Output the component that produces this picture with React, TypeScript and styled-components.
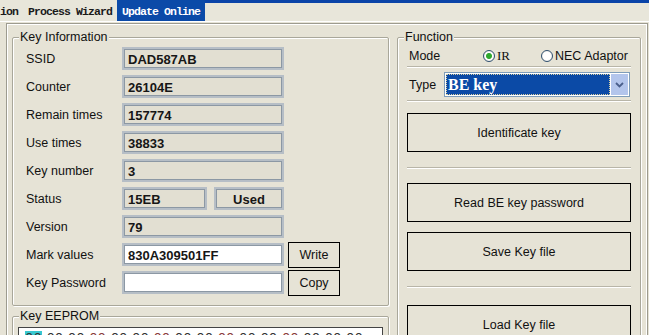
import React from 'react';
import styled, { createGlobalStyle } from 'styled-components';

const GlobalStyle = createGlobalStyle`
  html, body {
    margin: 0;
    padding: 0;
    background: #e6e3d6;
  }
  body {
    width: 649px;
    height: 335px;
    overflow: hidden;
    font-family: "Liberation Sans", Arial, sans-serif;
    font-size: 12.5px;
    color: #111;
  }
`;

const Window = styled.div`
  width: 649px;
  height: 335px;
  overflow: hidden;
  background: #e6e3d6;
`;

const TabBar = styled.div`
  display: flex;
  height: 21px;
  border-bottom: 1px solid #fff;
  background: #e8e6da;
`;

const Tab = styled.div<{ $active?: boolean }>`
  display: flex;
  align-items: center;
  padding: 1px 5px 0;
  font-family: "Liberation Mono", "Courier New", monospace;
  font-size: 11.5px;
  font-weight: bold;
  letter-spacing: -0.9px;
  color: ${(p) => (p.$active ? '#fff' : '#1a1a1a')};
  background: ${(p) => (p.$active ? '#0b4aa8' : 'transparent')};
  white-space: pre;

  &:first-child {
    padding-left: 0;
  }
`;

const TabFiller = styled.div`
  flex: 1;
  border-top: 3px solid #0a44a8;
`;

const Frame = styled.div`
  margin: 1px 1px 0 6px;
  padding: 6px 5px 0 5px;
  border-top: 1px solid #9d9b8f;
  border-left: 1px solid #9d9b8f;
  border-right: 1px solid #9d9b8f;
  box-shadow: inset 1px 1px 0 #fff, inset -1px 0 0 #fff;
  height: 320px;
  box-sizing: border-box;
`;

const Columns = styled.div`
  display: grid;
  grid-template-columns: 377px 244px;
  column-gap: 8px;
  align-items: start;
`;

const LeftCol = styled.div`
  display: flex;
  flex-direction: column;
`;

const Group = styled.fieldset<{ $gapTop?: number }>`
  margin: ${(p) => p.$gapTop ?? 0}px 0 0 0;
  padding: 0;
  min-width: 0;
  border: 1px solid #a9a79a;
  border-radius: 2px;
  box-shadow: inset 1px 1px 0 #fff, 1px 1px 0 #fff;
`;

const Caption = styled.legend`
  margin-left: 6px;
  padding: 0 1px;
  line-height: 14px;
  background: #e6e3d6;
  color: #111;
`;

const InfoGrid = styled.div`
  display: grid;
  grid-template-columns: 96px 162px 56px;
  grid-auto-rows: 23px;
  row-gap: 5px;
  align-items: center;
  padding: 3px 0 11px 13px;
`;

const Label = styled.div`
  white-space: nowrap;
`;

const ValueBox = styled.div<{ $white?: boolean; $width?: number; $center?: boolean }>`
  box-sizing: border-box;
  height: 23px;
  width: ${(p) => (p.$width ? `${p.$width}px` : '100%')};
  display: flex;
  align-items: center;
  justify-content: ${(p) => (p.$center ? 'center' : 'flex-start')};
  padding: 1px 4px 0;
  border: 2px solid #b6bec6;
  box-shadow: inset 0 0 0 1px #8c98a4;
  background: ${(p) => (p.$white ? '#fff' : '#e2dfd2')};
  font-weight: bold;
  font-size: 13px;
  color: #161616;
`;

const SplitCell = styled.div`
  display: flex;
  gap: 7px;
`;

const SmallButton = styled.div`
  box-sizing: border-box;
  height: 26px;
  width: 52px;
  margin: -1.5px 0 -1.5px 4px;
  display: flex;
  align-items: center;
  justify-content: center;
  border: 1px solid #000;
  background: #e6e3d6;
`;

const HexBox = styled.div`
  margin: 4px 5px 0 5px;
  height: 40px;
  border: 1px solid #444;
  background: #fff;
  display: flex;
  gap: 4.6px;
  padding: 3px 6px 0;
`;

const HexCell = styled.span<{ $hl?: boolean; $red?: boolean }>`
  font-family: "Liberation Mono", monospace;
  font-size: 14px;
  line-height: 16px;
  height: 16px;
  color: ${(p) => (p.$red ? '#8a3a3a' : '#333')};
  background: ${(p) => (p.$hl ? '#38c8d0' : 'transparent')};
`;

const FuncBody = styled.div`
  display: flex;
  flex-direction: column;
  padding: 4px 9px 20px 9px;
`;

const ModeRow = styled.div`
  display: flex;
  align-items: center;
  height: 15px;
  padding-left: 2px;
`;

const RowLabel = styled.div<{ $width: number }>`
  width: ${(p) => p.$width}px;
  flex-shrink: 0;
`;

const RadioOption = styled.div<{ $width?: number }>`
  display: flex;
  align-items: center;
  gap: 2px;
  width: ${(p) => (p.$width ? `${p.$width}px` : 'auto')};
`;

const RadioCircle = styled.span<{ $checked?: boolean }>`
  box-sizing: border-box;
  width: 12px;
  height: 12px;
  border-radius: 50%;
  border: 1px solid #2f4f6f;
  background: radial-gradient(circle at 50% 50%, ${(p) => (p.$checked ? '#2fa82f 0 2.5px, #8fd08f 3px,' : '')} #fff 3.5px, #dcdad0 100%);
`;

const SerifText = styled.span`
  font-family: "Liberation Serif", "Times New Roman", serif;
  font-size: 13px;
`;

const Separator = styled.div<{ $gapTop: number }>`
  margin-top: ${(p) => p.$gapTop}px;
  height: 0;
  border-top: 1px solid #b8b5a8;
  border-bottom: 1px solid #fff;
`;

const TypeRow = styled.div`
  display: flex;
  align-items: center;
  margin-top: 4px;
  padding-left: 2px;
`;

const Select = styled.div`
  flex: 1;
  margin-right: 1px;
  box-sizing: border-box;
  height: 25px;
  display: flex;
  border: 1px solid #7f9db9;
  background: #fff;
  padding: 1px;
`;

const SelectValue = styled.div`
  flex: 1;
  display: flex;
  align-items: center;
  padding-left: 2px;
  background: #0b4aa6;
  outline: 1px dotted #d8d0a0;
  outline-offset: -1px;
  color: #fff;
  font-family: "Liberation Serif", "Times New Roman", serif;
  font-weight: bold;
  font-size: 16px;
`;

const SelectArrow = styled.div`
  width: 17px;
  display: flex;
  align-items: center;
  justify-content: center;
  background: #b3c5ec;
  margin-left: 1px;
`;

const ActionButton = styled.div<{ $gapTop: number }>`
  margin-top: ${(p) => p.$gapTop}px;
  box-sizing: border-box;
  height: 39px;
  display: flex;
  align-items: center;
  justify-content: center;
  border: 1px solid #000;
  background: #e6e3d6;
  font-size: 12.5px;
`;

const hexRed = [3, 6, 9, 12];

export default function App() {
  return (
    <Window>
      <GlobalStyle />
      <TabBar>
        <Tab>ion</Tab>
        <Tab>Process Wizard</Tab>
        <Tab $active>Update Online</Tab>
        <TabFiller />
      </TabBar>
      <Frame>
        <Columns>
          <LeftCol>
            <Group>
              <Caption>Key Information</Caption>
              <InfoGrid>
                <Label>SSID</Label>
                <ValueBox>DAD587AB</ValueBox>
                <span />
                <Label>Counter</Label>
                <ValueBox>26104E</ValueBox>
                <span />
                <Label>Remain times</Label>
                <ValueBox>157774</ValueBox>
                <span />
                <Label>Use times</Label>
                <ValueBox>38833</ValueBox>
                <span />
                <Label>Key number</Label>
                <ValueBox>3</ValueBox>
                <span />
                <Label>Status</Label>
                <SplitCell>
                  <ValueBox $width={85}>15EB</ValueBox>
                  <ValueBox $width={70} $center>Used</ValueBox>
                </SplitCell>
                <span />
                <Label>Version</Label>
                <ValueBox>79</ValueBox>
                <span />
                <Label>Mark values</Label>
                <ValueBox $white>830A309501FF</ValueBox>
                <SmallButton>Write</SmallButton>
                <Label>Key Password</Label>
                <ValueBox $white />
                <SmallButton>Copy</SmallButton>
              </InfoGrid>
            </Group>
            <Group $gapTop={3}>
              <Caption>Key EEPROM</Caption>
              <HexBox>
                {Array.from({ length: 16 }).map((_, i) => (
                  <HexCell key={i} $hl={i === 0} $red={hexRed.includes(i)}>
                    00
                  </HexCell>
                ))}
              </HexBox>
            </Group>
          </LeftCol>

          <Group>
            <Caption>Function</Caption>
            <FuncBody>
              <ModeRow>
                <RowLabel $width={74}>Mode</RowLabel>
                <RadioOption $width={58}>
                  <RadioCircle $checked />
                  <SerifText>IR</SerifText>
                </RadioOption>
                <RadioOption>
                  <RadioCircle />
                  <span>NEC Adaptor</span>
                </RadioOption>
              </ModeRow>
              <Separator $gapTop={3} />
              <TypeRow>
                <RowLabel $width={35}>Type</RowLabel>
                <Select>
                  <SelectValue>BE key</SelectValue>
                  <SelectArrow>
                    <svg width="9" height="6" viewBox="0 0 9 6">
                      <path d="M1 1 L4.5 4.5 L8 1" fill="none" stroke="#4a5f8c" strokeWidth="1.8" />
                    </svg>
                  </SelectArrow>
                </Select>
              </TypeRow>
              <Separator $gapTop={3} />
              <ActionButton $gapTop={11}>Identificate key</ActionButton>
              <Separator $gapTop={15} />
              <ActionButton $gapTop={14}>Read BE key password</ActionButton>
              <ActionButton $gapTop={10}>Save Key file</ActionButton>
              <Separator $gapTop={15} />
              <ActionButton $gapTop={17}>Load Key file</ActionButton>
            </FuncBody>
          </Group>
        </Columns>
      </Frame>
    </Window>
  );
}
